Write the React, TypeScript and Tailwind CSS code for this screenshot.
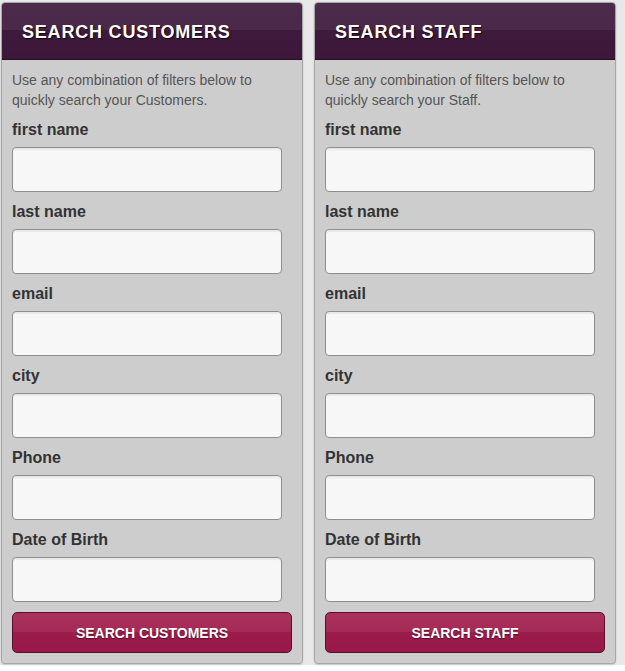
import React from "react";

const fields = ["first name", "last name", "email", "city", "Phone", "Date of Birth"];

function Panel({ title, who, button }: { title: string; who: string; button: string }) {
  return (
    <div className="w-[302px] h-[662px] flex flex-col border border-[#a6a6a6] rounded-[4px] bg-[#cdcdcd] overflow-hidden shadow-[0_1px_2px_rgba(0,0,0,0.15)]">
      <div className="h-[57px] shrink-0 flex items-center pl-[20px] border-b border-[#2a0e27] bg-[linear-gradient(#4c2a4b_0%,#4a2848_48%,#3e1a3c_48%,#3c1739_100%)]">
        <span className="text-white font-bold text-[18px] tracking-[0.8px] leading-none [text-shadow:1px_1px_1px_rgba(0,0,0,0.8)] pt-[2px]">
          {title}
        </span>
      </div>
      <div className="px-[10px] pt-[10px] pb-[10px] flex flex-col">
        <p className="text-[14px] leading-[20px] text-[#555555]">
          Use any combination of filters below to
          <br />
          quickly search your {who}.
        </p>
        {fields.map((f) => (
          <div key={f} className="flex flex-col">
            <label className="mt-[10px] text-[16px] leading-[20px] font-bold text-[#333333]">{f}</label>
            <input
              type="text"
              className="mt-[7px] w-[270px] h-[45px] rounded-[4px] border border-[#8e8e8e] bg-[#f7f7f7] shadow-[inset_0_2px_1px_rgba(0,0,0,0.06)] outline-none"
            />
          </div>
        ))}
        <button className="mt-[10px] h-[41px] w-full rounded-[5px] border border-[#5c0d2c] bg-[linear-gradient(#a9315b_0%,#a42b56_50%,#9b1b4b_50%,#981849_100%)] text-white font-bold text-[14px] [text-shadow:0_1px_1px_rgba(0,0,0,0.5)] pt-[1px]">
          {button}
        </button>
      </div>
    </div>
  );
}

export default function App() {
  return (
    <div className="w-[625px] h-[671px] bg-white" style={{ fontFamily: '"Liberation Sans", Arial, sans-serif' }}>
      <div className="h-[665px] bg-[#e8e8e8] pl-[1px] pt-[2px] flex gap-[11px]">
        <Panel title="SEARCH CUSTOMERS" who="Customers" button="SEARCH CUSTOMERS" />
        <Panel title="SEARCH STAFF" who="Staff" button="SEARCH STAFF" />
      </div>
    </div>
  );
}
